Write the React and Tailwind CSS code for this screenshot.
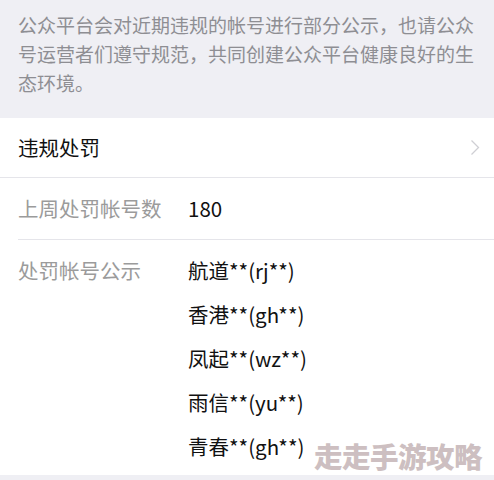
const items = ["航道**(rj**)", "香港**(gh**)", "凤起**(wz**)", "雨信**(yu**)", "青春**(gh**)"];

export default function App() {
  return (
    <div
      className="relative w-[494px] h-[480px] overflow-hidden bg-[#efeff4]"
      style={{ fontFamily: '"Noto Sans CJK SC", "Noto Sans", sans-serif' }}
    >
      {/* notice */}
      <div className="h-[118px] px-[18px] pt-[10px] text-[19px] leading-[29px] text-[#8e8e93]">
        公众平台会对近期违规的帐号进行部分公示，也请公众号运营者们遵守规范，共同创建公众平台健康良好的生态环境。
      </div>

      <div className="bg-white">
        <div className="h-[60px] flex items-center justify-between pl-[18px] pr-[14px] border-b border-[#e5e5ea]">
          <span className="text-[20.5px] text-[#111]">违规处罚</span>
          <svg width="10" height="17" viewBox="0 0 10 17" fill="none">
            <path d="M1.5 1.5 L8.5 8.5 L1.5 15.5" stroke="#cfcfd4" strokeWidth="1.3" />
          </svg>
        </div>

        <div className="ml-[18px] h-[62px] flex items-center border-b border-[#e5e5ea]">
          <span className="w-[170px] text-[20.5px] text-[#9b9b9b]">上周处罚帐号数</span>
          <span className="text-[20.5px] text-[#111]">180</span>
        </div>

        <div className="pl-[18px] pt-[8px] pb-[7px] flex">
          <span className="w-[170px] text-[20.5px] leading-[44px] text-[#9b9b9b]">处罚帐号公示</span>
          <div className="flex flex-col">
            {items.map((t) => (
              <span key={t} className="text-[20.5px] leading-[44px] text-[#111]">{t}</span>
            ))}
          </div>
        </div>
      </div>

      <div className="absolute left-[314px] top-[438px] text-[28.5px] leading-[36px] font-black text-[#cdbfc1] tracking-[-0.5px]">
        走走手游攻略
      </div>
    </div>
  );
}
